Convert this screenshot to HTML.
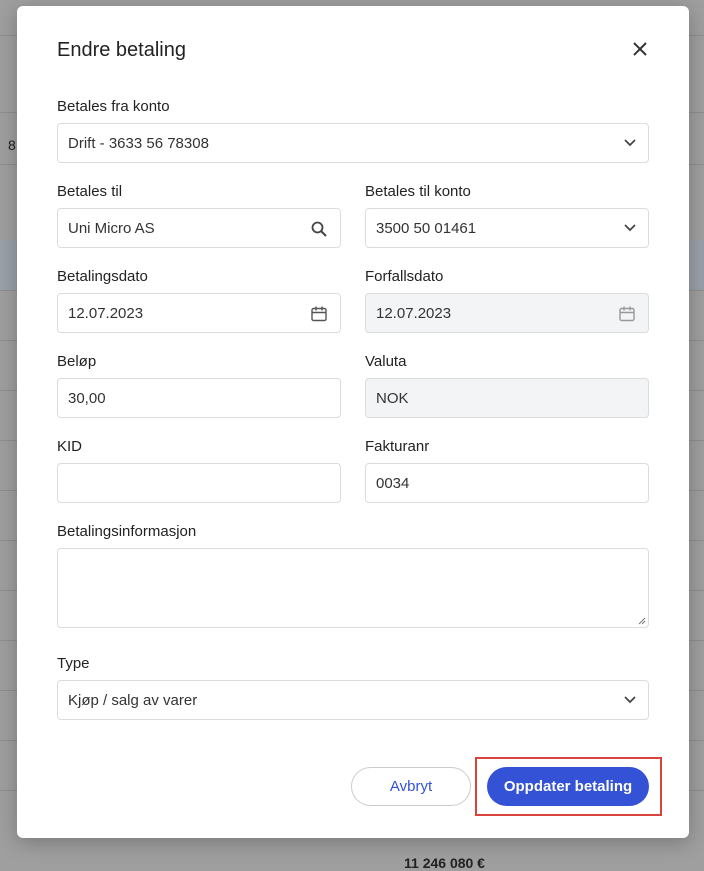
<!DOCTYPE html>
<html><head><style>
*{box-sizing:border-box;margin:0;padding:0}
body{width:704px;height:862px;background:#9f9f9f;font-family:"Liberation Sans",sans-serif;position:relative;overflow:hidden}
.line{position:absolute;left:0;right:0;height:1px;background:#8f8f8f}
.modal{position:absolute;left:17px;top:6px;width:672px;height:832px;background:#fff;border-radius:6px;box-shadow:0 4px 20px rgba(0,0,0,.25)}
h1{position:absolute;left:40px;top:33px;font-size:20px;font-weight:normal;color:#222}
.x{position:absolute;left:614px;top:34px}
.lbl{position:absolute;font-size:15px;color:#222}
.in{position:absolute;height:40px;border:1px solid #dcdcdc;border-radius:4px;font-size:15px;color:#333;padding:0 10px;line-height:40px}
.dis{background:#f3f4f6}
.ic{position:absolute;right:12px;top:11px}
.btn{position:absolute;height:39px;border-radius:20px;font-size:15px;text-align:center;line-height:37px}
</style></head><body>
<div class="line" style="top:35px"></div>
<div class="line" style="top:112px"></div>
<div class="line" style="top:164px"></div>
<div style="position:absolute;left:0;right:0;top:240px;height:50px;background:#9aa0a8"></div>
<div class="line" style="top:290px"></div><div class="line" style="top:340px"></div><div class="line" style="top:390px"></div><div class="line" style="top:440px"></div><div class="line" style="top:490px"></div><div class="line" style="top:540px"></div><div class="line" style="top:590px"></div><div class="line" style="top:640px"></div><div class="line" style="top:690px"></div><div class="line" style="top:740px"></div><div class="line" style="top:790px"></div>
<div style="position:absolute;left:8px;top:137px;font-size:14px;color:#222">8</div>
<div style="position:absolute;left:404px;top:855px;font-size:14px;color:#222;font-weight:bold">11 246 080 €</div>
<div class="modal">
<h1>Endre betaling</h1>
<svg class="x" width="18" height="18" viewBox="0 0 18 18"><path d="M3 3L15 15M15 3L3 15" stroke="#333" stroke-width="2"/></svg>
</div>
<div class="lbl" style="left:57px;top:98px">Betales fra konto</div>
<div class="in" style="left:57px;top:123px;width:592px">Drift - 3633 56 78308<svg class="ic" style="top:15px" width="12" height="8" viewBox="0 0 12 8"><path d="M1 1l5 5 5-5" fill="none" stroke="#444" stroke-width="1.7"/></svg></div>
<div class="lbl" style="left:57px;top:183px">Betales til</div>
<div class="in" style="left:57px;top:208px;width:284px">Uni Micro AS<svg class="ic" width="18" height="18" viewBox="0 0 18 18"><circle cx="7.5" cy="7.5" r="5" fill="none" stroke="#444" stroke-width="1.8"/><path d="M11 11l5 5" stroke="#444" stroke-width="2"/></svg></div>
<div class="lbl" style="left:365px;top:183px">Betales til konto</div>
<div class="in" style="left:365px;top:208px;width:284px">3500 50 01461<svg class="ic" style="top:15px" width="12" height="8" viewBox="0 0 12 8"><path d="M1 1l5 5 5-5" fill="none" stroke="#444" stroke-width="1.7"/></svg></div>
<div class="lbl" style="left:57px;top:268px">Betalingsdato</div>
<div class="in" style="left:57px;top:293px;width:284px">12.07.2023<svg class="ic" width="18" height="18" viewBox="0 0 18 18"><rect x="2" y="3.5" width="14" height="12" rx="1.5" fill="none" stroke="#555" stroke-width="1.4"/><path d="M2 7.5h14M6 1.5v4M12 1.5v4" stroke="#555" stroke-width="1.4"/></svg></div>
<div class="lbl" style="left:365px;top:268px">Forfallsdato</div>
<div class="in dis" style="left:365px;top:293px;width:284px">12.07.2023<svg class="ic" width="18" height="18" viewBox="0 0 18 18"><rect x="2" y="3.5" width="14" height="12" rx="1.5" fill="none" stroke="#999" stroke-width="1.4"/><path d="M2 7.5h14M6 1.5v4M12 1.5v4" stroke="#999" stroke-width="1.4"/></svg></div>
<div class="lbl" style="left:57px;top:353px">Beløp</div>
<div class="in" style="left:57px;top:378px;width:284px">30,00</div>
<div class="lbl" style="left:365px;top:353px">Valuta</div>
<div class="in dis" style="left:365px;top:378px;width:284px">NOK</div>
<div class="lbl" style="left:57px;top:438px">KID</div>
<div class="in" style="left:57px;top:463px;width:284px"></div>
<div class="lbl" style="left:365px;top:438px">Fakturanr</div>
<div class="in" style="left:365px;top:463px;width:284px">0034</div>
<div class="lbl" style="left:57px;top:523px">Betalingsinformasjon</div>
<div class="in" style="left:57px;top:548px;width:592px;height:80px"><svg style="position:absolute;right:2px;bottom:2px" width="8" height="8"><path d="M1 7L7 1M4 7L7 4" stroke="#777"/></svg></div>
<div class="lbl" style="left:57px;top:655px">Type</div>
<div class="in" style="left:57px;top:680px;width:592px">Kjøp / salg av varer<svg class="ic" style="top:15px" width="12" height="8" viewBox="0 0 12 8"><path d="M1 1l5 5 5-5" fill="none" stroke="#444" stroke-width="1.7"/></svg></div>
<div class="btn" style="left:351px;top:767px;width:120px;border:1px solid #ccc;color:#3452d6;background:#fff">Avbryt</div>
<div style="position:absolute;left:475px;top:757px;width:187px;height:59px;border:2px solid #d9453d"></div>
<div class="btn" style="left:487px;top:767px;width:162px;background:#3452d6;color:#fff;font-weight:bold;line-height:39px">Oppdater betaling</div>
</body></html>
